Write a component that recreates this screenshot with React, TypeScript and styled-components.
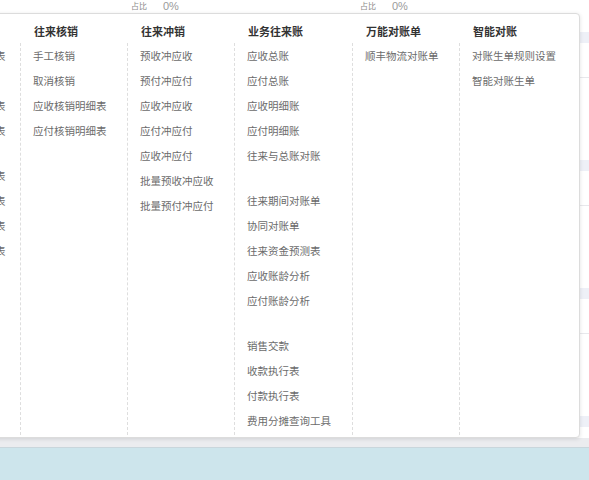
import styled, { createGlobalStyle } from "styled-components";

const GlobalStyle = createGlobalStyle`
  html, body {
    margin: 0;
    padding: 0;
    background: #ffffff;
    font-family: "Noto Sans CJK SC", "Noto Sans", sans-serif;
  }
`;

type MenuEntry = string | null;

interface MenuGroup {
  title: string;
  width?: number;
  indent?: number;
  items: MenuEntry[];
}

// null = group spacer
const groups: MenuGroup[] = [
  {
    title: "往来报表",
    width: 107,
    indent: 18,
    items: [
      "应收单据汇总表",
      "应收余额",
      "应收款项汇总表",
      "应付款项汇总表",
      null,
      "应收发票明细表",
      "应付发票明细表",
      "收款单据汇总表",
      "付款单据汇总表",
    ],
  },
  {
    title: "往来核销",
    width: 107,
    items: ["手工核销", "取消核销", "应收核销明细表", "应付核销明细表"],
  },
  {
    title: "往来冲销",
    width: 107,
    items: [
      "预收冲应收",
      "预付冲应付",
      "应收冲应收",
      "应付冲应付",
      "应收冲应付",
      "批量预收冲应收",
      "批量预付冲应付",
    ],
  },
  {
    title: "业务往来账",
    width: 118,
    items: [
      "应收总账",
      "应付总账",
      "应收明细账",
      "应付明细账",
      "往来与总账对账",
      null,
      "往来期间对账单",
      "协同对账单",
      "往来资金预测表",
      "应收账龄分析",
      "应付账龄分析",
      null,
      "销售交款",
      "收款执行表",
      "付款执行表",
      "费用分摊查询工具",
    ],
  },
  {
    title: "万能对账单",
    width: 107,
    items: ["顺丰物流对账单"],
  },
  {
    title: "智能对账",
    items: ["对账生单规则设置", "智能对账生单"],
  },
];

export default function App() {
  return (
    <>
      <GlobalStyle />
      <Page>
        <StatStrip>
          <Stat>
            <StatLabel>占比</StatLabel>
            <StatValue>0%</StatValue>
          </Stat>
          <Stat>
            <StatLabel>占比</StatLabel>
            <StatValue>0%</StatValue>
          </Stat>
        </StatStrip>
        <Body>
          {[0, 1, 2, 3].map((i) => (
            <Section key={i}>
              <SectionHead />
              <SectionRow />
            </Section>
          ))}
        </Body>
        <StatusBar />
        <Footer />

        <MegaMenu>
          {groups.map((g) => (
            <Column key={g.title} $width={g.width}>
              <ColumnTitle>{g.title}</ColumnTitle>
              <ColumnList $indent={g.indent}>
                {g.items.map((item, idx) =>
                  item === null ? (
                    <Spacer key={idx} />
                  ) : (
                    <MenuLink key={idx}>{item}</MenuLink>
                  )
                )}
              </ColumnList>
            </Column>
          ))}
        </MegaMenu>
      </Page>
    </>
  );
}

const Page = styled.div`
  position: relative;
  width: 589px;
  height: 480px;
  overflow: hidden;
  display: flex;
  flex-direction: column;
  background: #ffffff;
`;

const StatStrip = styled.div`
  height: 13px;
  display: flex;
  padding-left: 131px;
  box-sizing: border-box;
  overflow: hidden;
`;

const Stat = styled.div`
  width: 252px;
  display: flex;
  align-items: center;
  gap: 16px;
  height: 11px;
`;

const StatLabel = styled.span`
  font-size: 8px;
  color: #8a8a8a;
`;

const StatValue = styled.span`
  font-family: "Liberation Sans", Arial, sans-serif;
  font-size: 11px;
  color: #9a9a9a;
`;

const Body = styled.div`
  flex: 1;
  padding-top: 19px;
  overflow: hidden;
`;

const Section = styled.div`
  height: 128px;
`;

const SectionHead = styled.div`
  height: 11px;
  background: #eef0f7;
`;

const SectionRow = styled.div`
  height: 34px;
  border-bottom: 1px solid #e8e8ec;
`;

const StatusBar = styled.div`
  height: 9px;
  background: #ebecef;
  border-bottom: 1px solid #c9d6dc;
`;

const Footer = styled.div`
  height: 32px;
  background: #cde5ec;
`;

const MegaMenu = styled.div`
  position: absolute;
  top: 13px;
  left: -88px;
  width: 668px;
  height: 425px;
  box-sizing: border-box;
  display: flex;
  padding-top: 7px;
  background: #ffffff;
  border: 1px solid #dcdcdc;
  border-radius: 4px;
  box-shadow: 0 1px 4px rgba(0, 0, 0, 0.12);
`;

const Column = styled.div<{ $width?: number }>`
  display: flex;
  flex-direction: column;
  ${(p) => (p.$width ? `width: ${p.$width}px; flex: none;` : "flex: 1;")}
`;

const ColumnTitle = styled.div`
  height: 20px;
  line-height: 20px;
  padding-left: 14px;
  font-size: 11px;
  font-weight: 700;
  color: #333333;
  white-space: nowrap;
`;

const ColumnList = styled.div<{ $indent?: number }>`
  flex: 1;
  margin: 2px 0 2px;
  padding-left: ${(p) => p.$indent ?? 12}px;
  border-left: 1px dashed #dedede;
  display: flex;
  flex-direction: column;
`;

const MenuLink = styled.div`
  height: 25px;
  line-height: 25px;
  font-size: 10.5px;
  color: #6b6b6b;
  white-space: nowrap;
`;

const Spacer = styled.div`
  height: 20px;
`;
